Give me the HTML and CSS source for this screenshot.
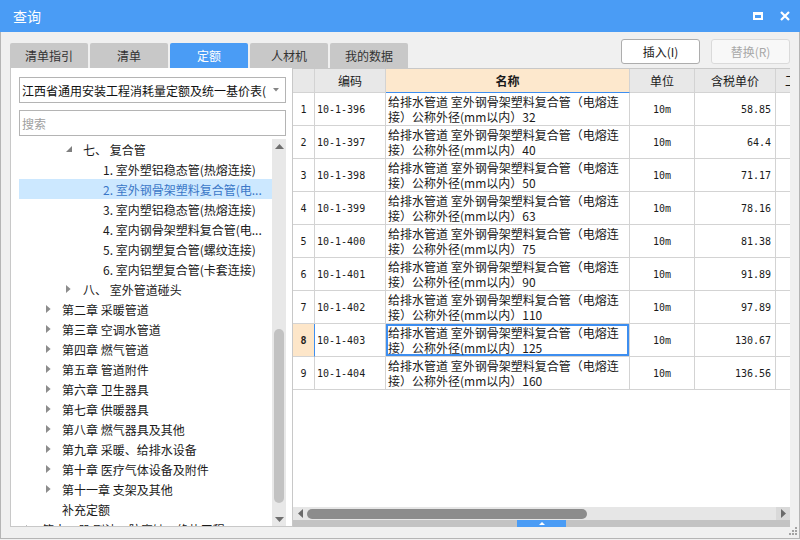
FILE: index.html
```html
<!DOCTYPE html>
<html lang="zh-CN">
<head>
<meta charset="utf-8">
<title>查询</title>
<link rel="stylesheet" href="styles.css">
</head>
<body>
<div class="window">
  <div class="titlebar">
    <span class="title">查询</span>
    <div class="win-ctrls">
      <svg width="10" height="8" viewBox="0 0 10 8"><path d="M0 0H10V8H0Z M2 3H8V6H2Z" fill="#fff" fill-rule="evenodd"/></svg>
      <svg width="10" height="10" viewBox="0 0 10 10"><path d="M1 1L9 9M9 1L1 9" stroke="#fff" stroke-width="2.2"/></svg>
    </div>
  </div>
  <div class="body">
    <div class="toolbar">
      <div class="tabs">
        <div class="tab">清单指引</div>
        <div class="tab">清单</div>
        <div class="tab active">定额</div>
        <div class="tab">人材机</div>
        <div class="tab">我的数据</div>
      </div>
      <div class="actions">
        <button class="btn">插入(I)</button>
        <button class="btn disabled">替换(R)</button>
      </div>
    </div>
    <div class="main">
      <div class="left">
        <div class="combo">
          <span class="combo-text">江西省通用安装工程消耗量定额及统一基价表(</span>
          <svg class="combo-arrow" width="6" height="4" viewBox="0 0 6 4"><path d="M0 0H6L3 3.5Z" fill="#858585"/></svg>
        </div>
        <div class="search"><span class="ph">搜索</span></div>
        <div class="tree">
          <div class="tree-list">
            <div class="node lv2"><span class="tg"><svg width="7" height="7" viewBox="0 0 7 7"><path d="M6 0V6H0Z" fill="#7f7f7f"/></svg></span><span>七、 复合管</span></div>
            <div class="node lv3"><span>1. 室外塑铝稳态管(热熔连接)</span></div>
            <div class="node lv3 sel"><span>2. 室外钢骨架塑料复合管(电...</span></div>
            <div class="node lv3"><span>3. 室内塑铝稳态管(热熔连接)</span></div>
            <div class="node lv3"><span>4. 室内钢骨架塑料复合管(电...</span></div>
            <div class="node lv3"><span>5. 室内钢塑复合管(螺纹连接)</span></div>
            <div class="node lv3"><span>6. 室内铝塑复合管(卡套连接)</span></div>
            <div class="node lv2"><span class="tg"><svg width="5" height="8" viewBox="0 0 5 8"><path d="M0 0L4.6 4L0 8Z" fill="#8c8c8c"/></svg></span><span>八、 室外管道碰头</span></div>
            <div class="node lv1"><span class="tg"><svg width="5" height="8" viewBox="0 0 5 8"><path d="M0 0L4.6 4L0 8Z" fill="#8c8c8c"/></svg></span><span>第二章 采暖管道</span></div>
            <div class="node lv1"><span class="tg"><svg width="5" height="8" viewBox="0 0 5 8"><path d="M0 0L4.6 4L0 8Z" fill="#8c8c8c"/></svg></span><span>第三章 空调水管道</span></div>
            <div class="node lv1"><span class="tg"><svg width="5" height="8" viewBox="0 0 5 8"><path d="M0 0L4.6 4L0 8Z" fill="#8c8c8c"/></svg></span><span>第四章 燃气管道</span></div>
            <div class="node lv1"><span class="tg"><svg width="5" height="8" viewBox="0 0 5 8"><path d="M0 0L4.6 4L0 8Z" fill="#8c8c8c"/></svg></span><span>第五章 管道附件</span></div>
            <div class="node lv1"><span class="tg"><svg width="5" height="8" viewBox="0 0 5 8"><path d="M0 0L4.6 4L0 8Z" fill="#8c8c8c"/></svg></span><span>第六章 卫生器具</span></div>
            <div class="node lv1"><span class="tg"><svg width="5" height="8" viewBox="0 0 5 8"><path d="M0 0L4.6 4L0 8Z" fill="#8c8c8c"/></svg></span><span>第七章 供暖器具</span></div>
            <div class="node lv1"><span class="tg"><svg width="5" height="8" viewBox="0 0 5 8"><path d="M0 0L4.6 4L0 8Z" fill="#8c8c8c"/></svg></span><span>第八章 燃气器具及其他</span></div>
            <div class="node lv1"><span class="tg"><svg width="5" height="8" viewBox="0 0 5 8"><path d="M0 0L4.6 4L0 8Z" fill="#8c8c8c"/></svg></span><span>第九章 采暖、给排水设备</span></div>
            <div class="node lv1"><span class="tg"><svg width="5" height="8" viewBox="0 0 5 8"><path d="M0 0L4.6 4L0 8Z" fill="#8c8c8c"/></svg></span><span>第十章 医疗气体设备及附件</span></div>
            <div class="node lv1"><span class="tg"><svg width="5" height="8" viewBox="0 0 5 8"><path d="M0 0L4.6 4L0 8Z" fill="#8c8c8c"/></svg></span><span>第十一章 支架及其他</span></div>
            <div class="node lv1"><span class="tg"></span><span>补充定额</span></div>
            <div class="node lv0"><span class="tg"><svg width="5" height="8" viewBox="0 0 5 8"><path d="M0 0L4.6 4L0 8Z" fill="#8c8c8c"/></svg></span><span>第十二册 刷油、防腐蚀、绝热工程</span></div>
          </div>
          <div class="vscroll">
            <div class="vs-btn"><svg width="9" height="5" viewBox="0 0 9 5"><path d="M0 5L4.5 0L9 5Z" fill="#6f6f6f"/></svg></div>
            <div class="vs-track"><div class="vs-thumb"></div></div>
            <div class="vs-btn"><svg width="9" height="5" viewBox="0 0 9 5"><path d="M0 0H9L4.5 5Z" fill="#6f6f6f"/></svg></div>
          </div>
        </div>
      </div>
      <div class="grid">
        <div class="row hdr">
          <div class="c-rn"></div>
          <div class="c-hd">编码</div>
          <div class="c-hd cur">名称</div>
          <div class="c-hd">单位</div>
          <div class="c-hd">含税单价</div>
          <div class="c-hd c-last">工程量</div>
        </div>
        <div class="row drow"><div class="c-rn num">1</div><div class="c-code num">10-1-396</div><div class="c-name">给排水管道 室外钢骨架塑料复合管（电熔连接）公称外径(mm以内）32</div><div class="c-unit num">10m</div><div class="c-price num">58.85</div><div class="c-x"></div></div>
        <div class="row drow"><div class="c-rn num">2</div><div class="c-code num">10-1-397</div><div class="c-name">给排水管道 室外钢骨架塑料复合管（电熔连接）公称外径(mm以内）40</div><div class="c-unit num">10m</div><div class="c-price num">64.4</div><div class="c-x"></div></div>
        <div class="row drow"><div class="c-rn num">3</div><div class="c-code num">10-1-398</div><div class="c-name">给排水管道 室外钢骨架塑料复合管（电熔连接）公称外径(mm以内）50</div><div class="c-unit num">10m</div><div class="c-price num">71.17</div><div class="c-x"></div></div>
        <div class="row drow"><div class="c-rn num">4</div><div class="c-code num">10-1-399</div><div class="c-name">给排水管道 室外钢骨架塑料复合管（电熔连接）公称外径(mm以内）63</div><div class="c-unit num">10m</div><div class="c-price num">78.16</div><div class="c-x"></div></div>
        <div class="row drow"><div class="c-rn num">5</div><div class="c-code num">10-1-400</div><div class="c-name">给排水管道 室外钢骨架塑料复合管（电熔连接）公称外径(mm以内）75</div><div class="c-unit num">10m</div><div class="c-price num">81.38</div><div class="c-x"></div></div>
        <div class="row drow"><div class="c-rn num">6</div><div class="c-code num">10-1-401</div><div class="c-name">给排水管道 室外钢骨架塑料复合管（电熔连接）公称外径(mm以内）90</div><div class="c-unit num">10m</div><div class="c-price num">91.89</div><div class="c-x"></div></div>
        <div class="row drow"><div class="c-rn num">7</div><div class="c-code num">10-1-402</div><div class="c-name">给排水管道 室外钢骨架塑料复合管（电熔连接）公称外径(mm以内）110</div><div class="c-unit num">10m</div><div class="c-price num">97.89</div><div class="c-x"></div></div>
        <div class="row drow active"><div class="c-rn num">8</div><div class="c-code num">10-1-403</div><div class="c-name focus">给排水管道 室外钢骨架塑料复合管（电熔连接）公称外径(mm以内）125</div><div class="c-unit num">10m</div><div class="c-price num">130.67</div><div class="c-x"></div></div>
        <div class="row drow"><div class="c-rn num">9</div><div class="c-code num">10-1-404</div><div class="c-name">给排水管道 室外钢骨架塑料复合管（电熔连接）公称外径(mm以内）160</div><div class="c-unit num">10m</div><div class="c-price num">136.56</div><div class="c-x"></div></div>
        <div class="filler"></div>
        <div class="hscroll">
          <div class="hs-btn"><svg width="5" height="9" viewBox="0 0 5 9"><path d="M5 0V9L0 4.5Z" fill="#6a6a6a"/></svg></div>
          <div class="hs-thumb"></div>
          <div class="hs-btn hs-right"><svg width="5" height="9" viewBox="0 0 5 9"><path d="M0 0V9L5 4.5Z" fill="#6a6a6a"/></svg></div>
        </div>
        <div class="splitter"><div class="split-handle"><svg width="6" height="3" viewBox="0 0 6 3"><path d="M0 3L3 0L6 3Z" fill="#fff"/></svg></div></div>
      </div>
    </div>
  </div>
  <svg class="grip" width="9" height="9" viewBox="0 0 9 9"><g fill="#a3a3a3"><rect x="6" y="0" width="2" height="2"/><rect x="3" y="3" width="2" height="2"/><rect x="6" y="3" width="2" height="2"/><rect x="0" y="6" width="2" height="2"/><rect x="3" y="6" width="2" height="2"/><rect x="6" y="6" width="2" height="2"/></g></svg>
</div>
</body>
</html>
```

FILE: styles.css
```css
* { box-sizing: border-box; margin: 0; padding: 0; }
html, body { width: 800px; height: 540px; overflow: hidden; background: #f0f0f0; }
body { font-family: "Noto Sans CJK SC", "Noto Sans", sans-serif; font-size: 12px; color: #1a1a1a; }

.window { width: 800px; height: 539px; display: flex; flex-direction: column; position: relative; }

.titlebar { height: 32px; flex: none; background: #4a9cf5; color: #fff; display: flex; align-items: center; padding-left: 13px; }
.title { font-size: 14px; line-height: 1; }
.win-ctrls { margin-left: auto; display: flex; align-items: center; gap: 17px; padding-right: 10px; }

.body { flex: 1; display: flex; flex-direction: column; border: 1px solid #b5b5b5; border-top: none; padding: 7px 9px 11px 9px; }

.toolbar { height: 29px; flex: none; display: flex; }
.tabs { display: flex; gap: 2px; align-self: flex-end; }
.tab { width: 78px; height: 25px; background: #c8c8c8; color: #333; display: flex; align-items: center; justify-content: center; border-radius: 2px 2px 0 0; line-height: 1; }
.tab.active { background: #4a9cf5; color: #fff; }
.actions { margin-left: auto; display: flex; gap: 11px; align-self: flex-start; }
.btn { width: 79px; height: 25px; background: #fff; border: 1px solid #adadad; border-radius: 3px; font: 12px "Noto Sans CJK SC", sans-serif; color: #1a1a1a; }
.btn.disabled { border-color: #dadada; color: #a8a8a8; background: #f8f8f8; }

.main { height: 459px; flex: none; display: flex; }

.left { width: 282px; flex: none; background: #fff; border-left: 1px solid #c8c8c8; border-bottom: 1px solid #c8c8c8; padding: 9px 6px 0 8px; display: flex; flex-direction: column; }
.combo { height: 26px; flex: none; border: 1px solid #b4b4b4; display: flex; align-items: center; padding: 0 6px 0 2px; }
.combo-text { flex: 1; white-space: nowrap; overflow: hidden; color: #111; }
.combo-arrow { flex: none; margin-left: 4px; }
.search { height: 26px; flex: none; margin-top: 7px; border: 1px solid #b4b4b4; display: flex; align-items: center; padding-left: 2px; }
.ph { color: #a0a0a0; }

.tree { flex: 1; min-height: 0; margin-top: 3px; display: flex; overflow: hidden; }
.tree-list { flex: 1; min-width: 0; overflow: hidden; }
.node { height: 20px; display: flex; align-items: center; white-space: nowrap; color: #1a1a1a; }
.node .tg { width: 16px; flex: none; display: flex; align-items: center; }
.lv0 { padding-left: 7px; }
.lv1 { padding-left: 27px; }
.lv2 { padding-left: 48px; }
.lv2 .tg { margin-left: -1px; width: 17px; }
.lv3 { padding-left: 84px; }
.node.sel { background: #cce8ff; color: #3a77c7; }

.vscroll { width: 14px; flex: none; background: #e8e8e8; display: flex; flex-direction: column; }
.vs-btn { height: 14px; flex: none; display: flex; align-items: center; justify-content: center; }
.vs-track { flex: 1; }
.vs-thumb { margin: 176px 0 0 2px; width: 10px; height: 174px; border-radius: 5px; background: #c2c2c2; }

.grid { flex: 1; min-width: 0; background: #fff; border-top: 1px solid #c8c8c8; border-left: 1px solid #c8c8c8; display: flex; flex-direction: column; overflow: hidden; }
.row { display: grid; grid-template-columns: 22px 71px 244px 65px 81px 60px; flex: none; }
.row > div { border-right: 1px solid #d3d3d3; border-bottom: 1px solid #d3d3d3; display: flex; align-items: center; overflow: hidden; }
.hdr { height: 24px; }
.hdr > div { background: #e8e8e8; justify-content: center; color: #1a1a1a; }
.hdr .cur { background: #fde8cd; font-weight: bold; border-bottom-color: #3d8ef0; }
.hdr .c-last { justify-content: flex-start; padding-left: 9px; white-space: nowrap; }
.drow { height: 33px; }
.num { font-family: "DejaVu Sans Mono", "Liberation Mono", monospace; font-size: 10px; }
.c-rn { justify-content: center; }
.c-code { padding-left: 2px; }
.c-name { padding: 0 4px 0 2px; line-height: 15px; font-size: 12px; }
.c-unit { justify-content: center; }
.c-price { justify-content: flex-end; padding-right: 4px; }
.drow.active .c-rn { background: #fde6c9; font-weight: bold; border-right-color: #3d8ef0; }
.c-name.focus { box-shadow: inset 0 0 0 2px #3d8ef0; }

.filler { flex: 1; }
.hscroll { height: 13px; flex: none; background: #e6e6e6; display: flex; align-items: center; }
.hs-btn { width: 14px; height: 13px; flex: none; display: flex; align-items: center; justify-content: center; }
.hs-thumb { width: 280px; height: 10px; border-radius: 5px; background: #8c8c8c; }
.hs-right { margin-left: auto; background: #d9d9d9; }
.splitter { height: 7px; flex: none; background: #c3c3c3; display: flex; justify-content: center; }
.split-handle { width: 49px; background: #4a9cf5; display: flex; align-items: center; justify-content: center; }

.grip { position: absolute; right: 2px; bottom: 3px; }
```
